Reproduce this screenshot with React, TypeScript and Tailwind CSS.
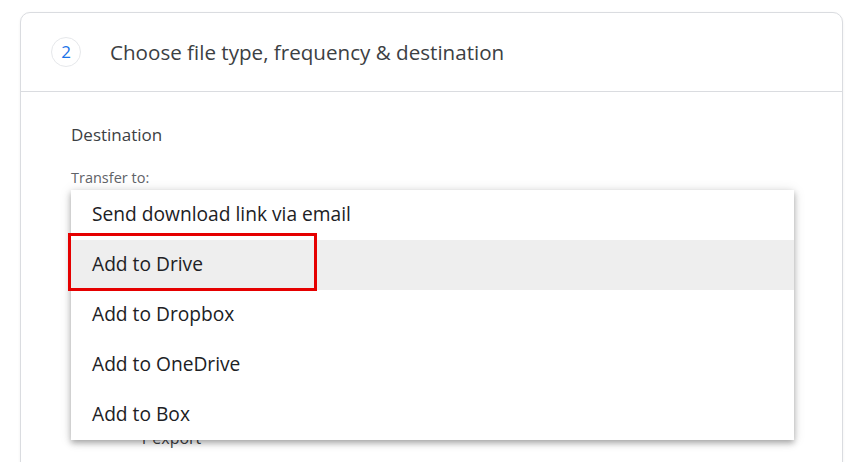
const items = [
  "Send download link via email",
  "Add to Drive",
  "Add to Dropbox",
  "Add to OneDrive",
  "Add to Box",
];

export default function App() {
  return (
    <div
      className="h-[462px] w-[859px] overflow-hidden bg-white pl-[20px] pt-[12px]"
      style={{ fontFamily: '"Open Sans", "Liberation Sans", sans-serif' }}
    >
      <div className="relative h-[480px] w-[823px] rounded-[10px] border border-[#dadce0] bg-white shadow-[0_1px_3px_rgba(0,0,0,0.06)]">
        {/* ── Header ── */}
        <div className="flex h-[79px] items-center gap-[29px] border-b border-[#dadce0] pl-[30px]">
          <div className="flex h-[30px] w-[30px] items-center justify-center rounded-full border border-[#e6e8eb] text-[17px] font-medium text-[#1a73e8]">
            2
          </div>
          <h2 className="text-[20.6px] text-[#3c4043]">Choose file type, frequency &amp; destination</h2>
        </div>

        {/* ── Body ── */}
        <div className="flex flex-col pl-[50px] pt-[30px]">
          <p className="text-[17px] font-medium text-[#3c4043]">Destination</p>
          <p className="mt-[19px] text-[14.5px] text-[#5f6368]">Transfer to:</p>
          <div className="h-[48px]" />
          <div className="mt-[190px] pl-[68px] text-[16px] text-[#3c4043]">1 export</div>
        </div>

        {/* ── Dropdown menu ── */}
        <div className="absolute left-[50px] top-[177px] w-[723px] bg-white shadow-[0_3px_6px_rgba(0,0,0,0.3),0_1px_12px_rgba(0,0,0,0.12)]">
          {items.map((item, i) => (
            <div
              key={item}
              className={
                i === 1
                  ? "flex h-[50px] items-center bg-[#eeeeee] pb-[2px] pl-[21px] text-[19.2px] text-[#202124]"
                  : "flex h-[50px] items-center pb-[2px] pl-[21px] text-[19.2px] text-[#202124]"
              }
            >
              {item}
            </div>
          ))}
        </div>

        {/* ── Highlight annotation ── */}
        <div className="absolute left-[47px] top-[220px] h-[58px] w-[249px] border-[3px] border-[#e50000]" />
      </div>
    </div>
  );
}
